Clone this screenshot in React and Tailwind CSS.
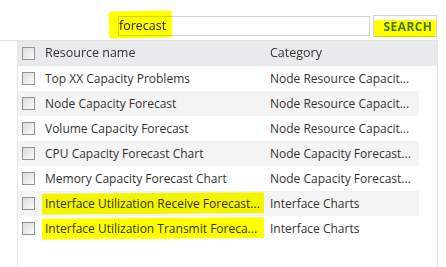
import React from 'react';

const rows = [
  { name: 'Top XX Capacity Problems', category: 'Node Resource Capacit...' },
  { name: 'Node Capacity Forecast', category: 'Node Resource Capacit...' },
  { name: 'Volume Capacity Forecast', category: 'Node Resource Capacit...' },
  { name: 'CPU Capacity Forecast Chart', category: 'Node Capacity Forecast...' },
  { name: 'Memory Capacity Forecast Chart', category: 'Node Capacity Forecast...' },
  { name: 'Interface Utilization Receive Forecast...', category: 'Interface Charts', marked: true },
  { name: 'Interface Utilization Transmit Foreca...', category: 'Interface Charts', marked: true },
];

const Checkbox = () => (
  <div className="w-[13px] h-[13px] shrink-0 border border-[#939393] bg-gradient-to-br from-[#dcdcdc] to-[#fbfbfb]" />
);

const App = () => {
  return (
    <div className="w-[446px] h-[267px] overflow-hidden bg-white font-['Open_Sans',sans-serif] text-[12px] text-[#333]">
      {/* Search bar */}
      <div className="relative h-[40px] flex items-start pt-[15px] pl-[118px]">
        <div className="w-[252px] h-[20px] mt-[1px] border border-[#d4d4d4] flex items-center pl-[0px] text-[12.5px] text-[#222] leading-none">
          forecast
        </div>
        <div className="ml-[3px] w-[64px] h-[22px] border border-[#d4d4d4] flex items-center justify-center pl-[6px] pt-[2px] text-[12px] font-bold text-[#3f7a12] tracking-[0.4px]">
          SEARCH
        </div>
        {/* marker highlights */}
        <div className="absolute left-[109px] top-[11px] w-[63px] h-[27px] bg-[#ffff00] mix-blend-multiply rounded-[3px] -rotate-1" />
        <div className="absolute left-[374px] top-[20px] w-[62px] h-[17px] bg-[#ffff00] mix-blend-multiply rounded-[2px]" />
      </div>

      {/* Table */}
      <div className="w-[438px] border-t border-[#e3e3e3]">
        <div className="ml-[17px] h-[227px] border-l border-r border-[#e6e6e6]">
          <div className="h-[25px] bg-[#e9eaeb] flex items-center pl-[4px] text-[12.5px]">
            <Checkbox />
            <span className="ml-[10px] w-[225px]">Resource name</span>
            <span>Category</span>
          </div>
          <div className="w-[401px]">
            {rows.map((row, i) => (
              <div
                key={i}
                className={`relative h-[25px] flex items-center pl-[4px] ${i % 2 === 1 ? 'bg-[#f4f4f4]' : 'bg-white'}`}
              >
                <Checkbox />
                <span className="ml-[10px] w-[225px] whitespace-nowrap">{row.name}</span>
                <span className="whitespace-nowrap">{row.category}</span>
                {row.marked && (
                  <div className="absolute left-[24px] top-[2px] w-[222px] h-[21px] bg-[#ffff00] mix-blend-multiply -rotate-[0.4deg]" />
                )}
              </div>
            ))}
          </div>
        </div>
      </div>
    </div>
  );
};

export default App;
